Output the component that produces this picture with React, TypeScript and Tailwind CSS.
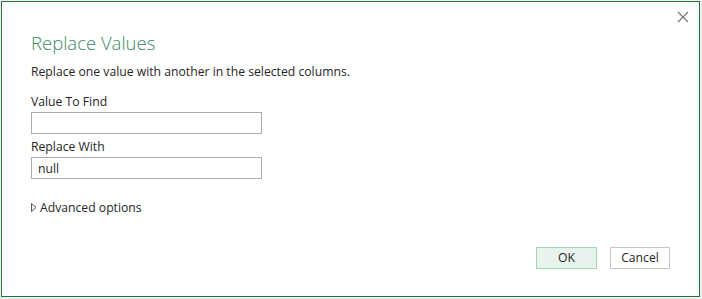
import { useState } from "react";

export default function App() {
  const [find, setFind] = useState("");
  const [replace, setReplace] = useState("null");

  return (
    <div className="h-[299px] w-[702px] bg-[#f0f0f0] pb-[2px] pl-px pr-[2px] pt-px font-['Segoe_UI','Open_Sans',sans-serif] text-[#262626]">
      <div className="relative flex h-full flex-col border border-[#217346] bg-white pl-[29px] pr-[29px]">
        <button
          type="button"
          aria-label="Close"
          className="absolute right-[9px] top-[8px] p-px text-[#777]"
        >
          <svg width="12" height="12" viewBox="0 0 12 12" aria-hidden>
            <path d="M1 1L11 11M11 1L1 11" stroke="currentColor" strokeWidth="1.2" />
          </svg>
        </button>

        <h1 className="mt-[27px] text-[18.5px] font-light leading-[28px] text-[#3a8a66]">
          Replace Values
        </h1>
        <p className="mt-[6px] text-[12.2px] leading-[17px]">
          Replace one value with another in the selected columns.
        </p>

        <label className="mt-[13px] text-[12.2px] leading-[17px]">Value To Find</label>
        <input
          value={find}
          onChange={(e) => setFind(e.target.value)}
          className="mt-[2px] h-[22px] w-[231px] border border-[#ababab] px-[6px] text-[12.2px] outline-none"
        />

        <label className="mt-[4px] text-[12.2px] leading-[17px]">Replace With</label>
        <input
          value={replace}
          onChange={(e) => setReplace(e.target.value)}
          className="mt-[2px] h-[22px] w-[231px] border border-[#ababab] px-[6px] text-[12.2px] outline-none"
        />

        <div className="mt-[20px] flex items-center gap-[3px] text-[12.2px] leading-[17px]">
          <svg width="6" height="9" viewBox="0 0 6 9" aria-hidden>
            <path d="M0.5 0.5L5 4.5L0.5 8.5Z" fill="none" stroke="#555" strokeWidth="1" />
          </svg>
          <span>Advanced options</span>
        </div>

        <div className="mt-auto mb-[27px] flex justify-end gap-[13px]">
          <button
            type="button"
            className="h-[22px] w-[61px] border border-[#9fd6b5] bg-[#e8f3ee] text-[12.2px]"
          >
            OK
          </button>
          <button
            type="button"
            className="h-[22px] w-[60px] border border-[#c6c6c6] bg-white text-[12.2px]"
          >
            Cancel
          </button>
        </div>
      </div>
    </div>
  );
}
